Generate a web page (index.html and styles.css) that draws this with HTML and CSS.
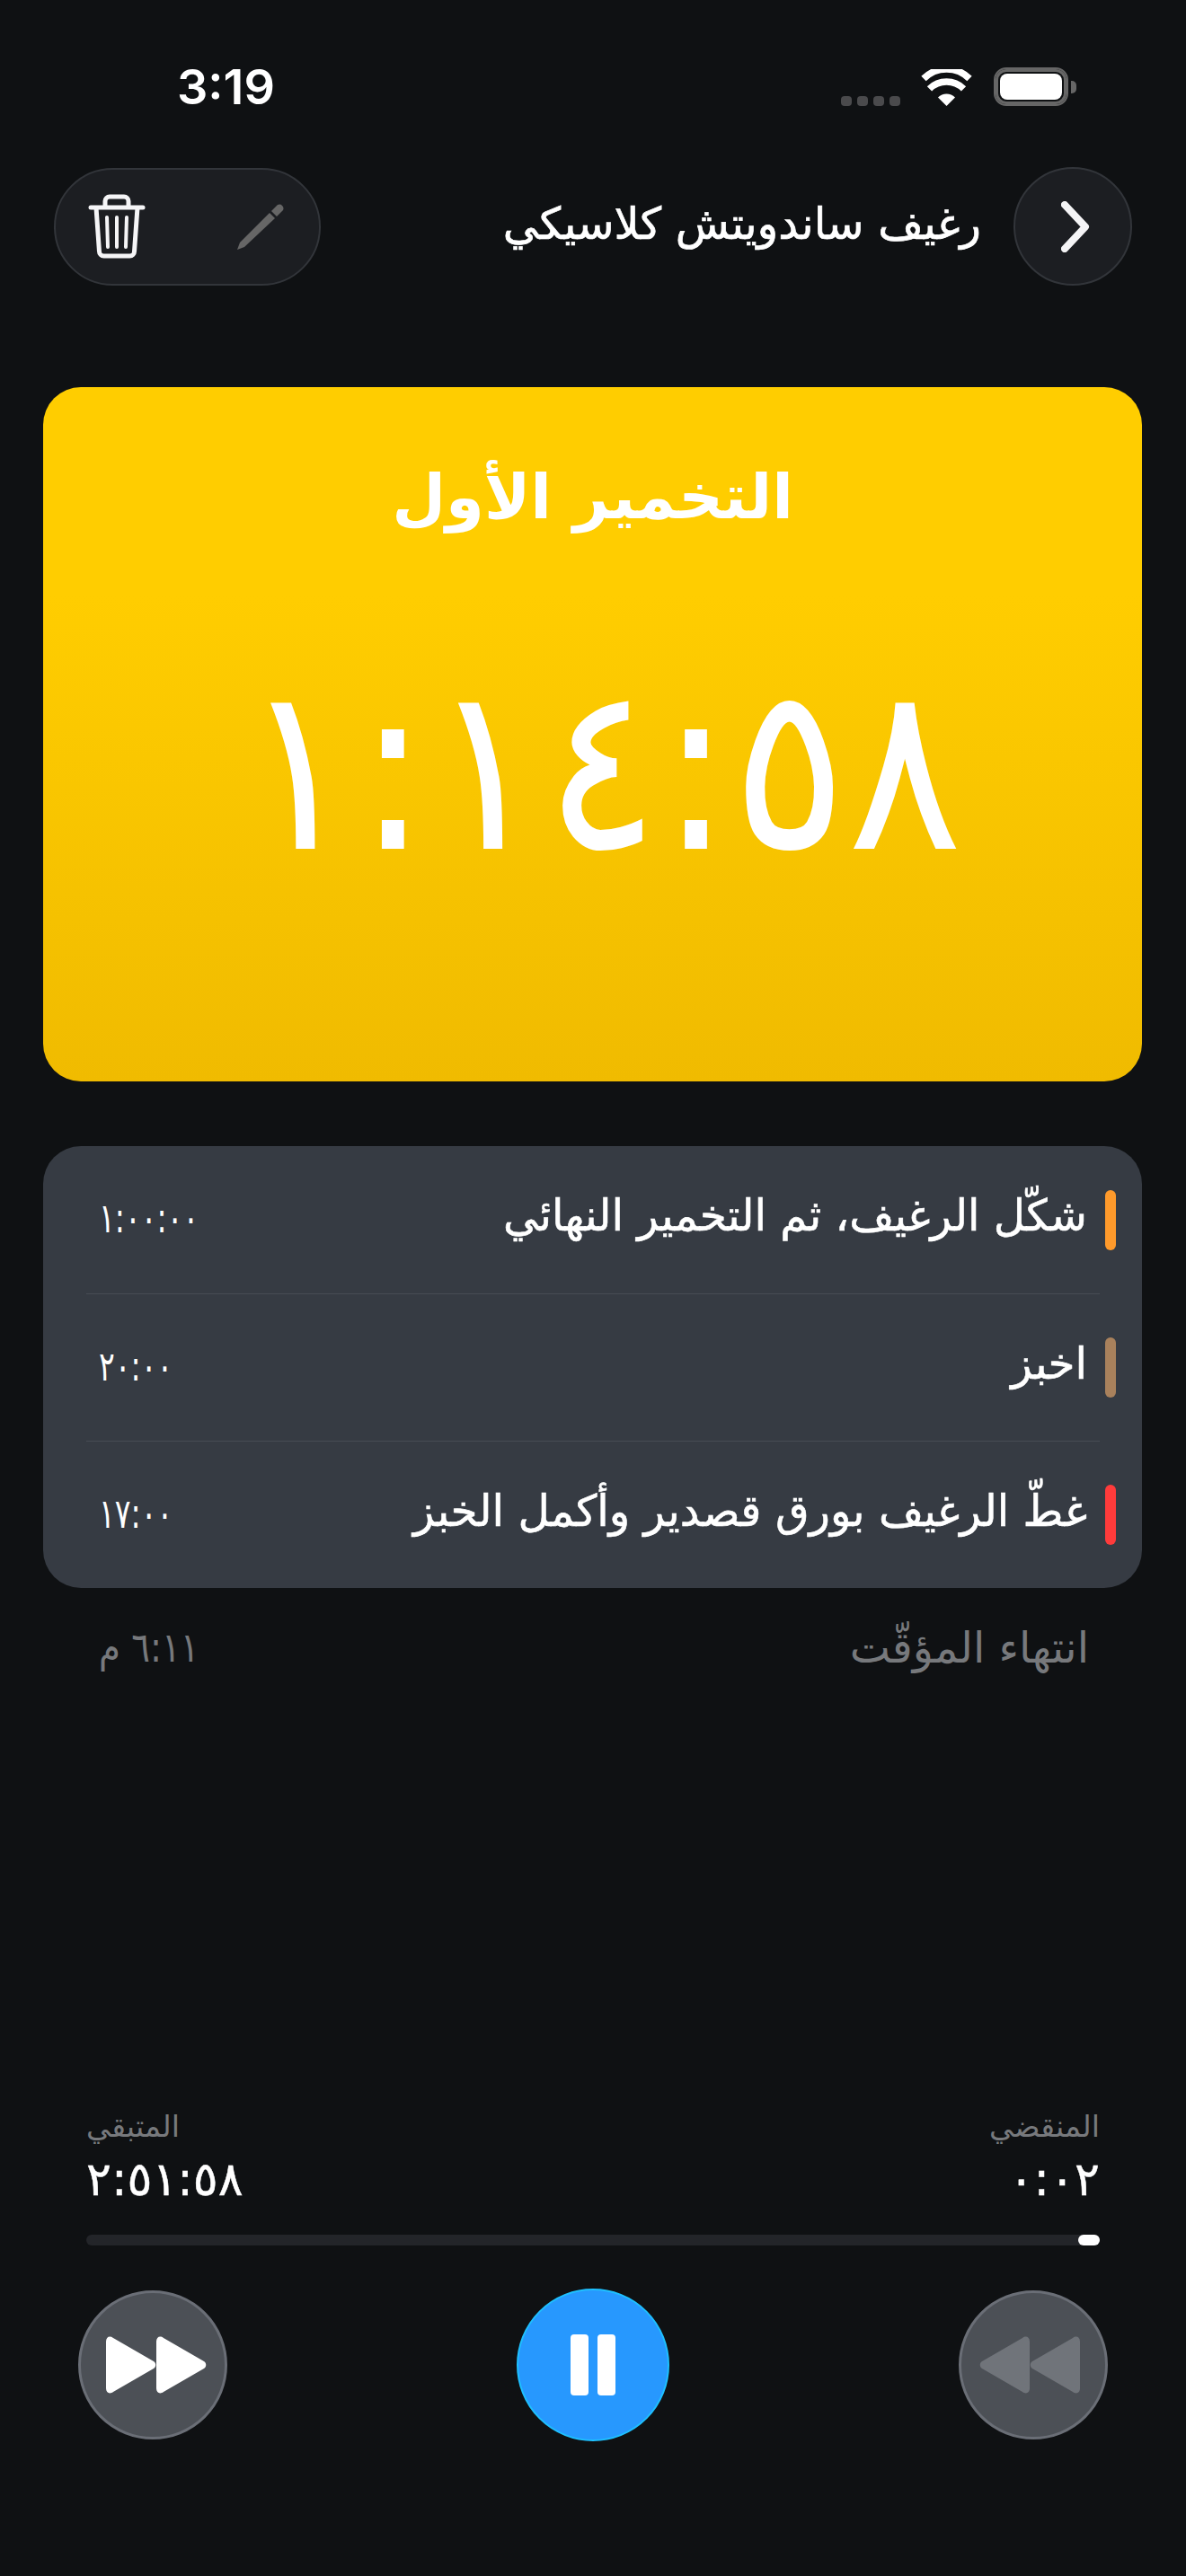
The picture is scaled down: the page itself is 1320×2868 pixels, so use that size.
FILE: index.html
```html
<!DOCTYPE html>
<html lang="ar" dir="rtl">
<head>
    <meta charset="UTF-8">
    <title>رغيف ساندويتش كلاسيكي</title>
    <link rel="stylesheet" href="styles.css">
</head>
<body>
<div class="page">
    <!-- status bar -->
    <div class="status" dir="ltr">
        <span class="clock">3:19</span>
        <div class="status_icons">
            <div class="signal"><i></i><i></i><i></i><i></i></div>
            <svg class="wifi" width="57" height="41" viewBox="0 0 57 41">
                <path d="M28.5 41 19 31.4a13.5 13.5 0 0 1 19 0z" fill="#fff"/>
                <path d="M9.5 21.8a27 27 0 0 1 38 0" fill="none" stroke="#fff" stroke-width="7.5"/>
                <path d="M3 11.5a36 36 0 0 1 51 0" fill="none" stroke="#fff" stroke-width="7.5" transform="translate(0 -1)"/>
            </svg>
            <div class="battery"><div class="battery_fill"></div></div>
            <div class="battery_nub"></div>
        </div>
    </div>

    <!-- title row -->
    <div class="topbar">
        <div class="round_btn">
            <svg width="32" height="57" viewBox="0 0 32 57"><path d="M4 4 27 28.500 4 53" fill="none" stroke="#f4f4f6" stroke-width="8" stroke-linecap="round" stroke-linejoin="round"/></svg>
        </div>
        <div class="recipe_name">رغيف ساندويتش كلاسيكي</div>
        <div class="tools">
            <svg width="54" height="54" viewBox="0 0 54 54">
                <path d="M1 53 4 45 37 12 43 18 9 50z" fill="#666"/>
                <path d="M39 10 46 3a4.500 4.500 0 0 1 6 6l-7 7z" fill="#666"/>
            </svg>
            <svg width="64" height="72" viewBox="0 0 64 72">
                <path d="M19 13V8a5 5 0 0 1 5-5h16a5 5 0 0 1 5 5v5" fill="none" stroke="#f5f5f7" stroke-width="5"/>
                <path d="M3 15h58" stroke="#f5f5f7" stroke-width="5" stroke-linecap="round"/>
                <path d="M9 15l3.500 49a5 5 0 0 0 5 5h29a5 5 0 0 0 5-5L55 15" fill="none" stroke="#f5f5f7" stroke-width="5"/>
                <path d="M21 26l1 33M32 26v33M43 26l-1 33" stroke="#f5f5f7" stroke-width="4" stroke-linecap="round"/>
            </svg>
        </div>
    </div>

    <!-- current step -->
    <div class="step_card">
        <div class="step_title">التخمير الأول</div>
        <div class="step_time" dir="ltr">١:١٤:٥٨</div>
    </div>

    <!-- next steps -->
    <div class="steps">
        <div class="step_row">
            <span class="step_mark orange"></span>
            <span class="step_name">شكّل الرغيف، ثم التخمير النهائي</span>
            <span class="step_len" dir="ltr">١:٠٠:٠٠</span>
        </div>
        <div class="step_row">
            <span class="step_mark brown"></span>
            <span class="step_name">اخبز</span>
            <span class="step_len" dir="ltr">٢٠:٠٠</span>
        </div>
        <div class="step_row">
            <span class="step_mark red"></span>
            <span class="step_name">غطّ الرغيف بورق قصدير وأكمل الخبز</span>
            <span class="step_len" dir="ltr">١٧:٠٠</span>
        </div>
    </div>
    <div class="finish">
        <span>انتهاء المؤقّت</span>
        <span class="finish_time">٦:١١ م</span>
    </div>

    <!-- progress and controls -->
    <div class="bottom">
        <div class="times">
            <div class="time_col">
                <div class="time_label">المنقضي</div>
                <div class="time_value right" dir="ltr">٠:٠٢</div>
            </div>
            <div class="time_col">
                <div class="time_label left">المتبقي</div>
                <div class="time_value" dir="ltr">٢:٥١:٥٨</div>
            </div>
        </div>
        <div class="progress"><div class="progress_thumb"></div></div>
        <div class="controls">
            <div class="ctrl_btn back">
                <svg width="114" height="66" viewBox="0 0 114 66">
                    <path d="M57 7c0-5-4-7-8-4L4 29c-3 2-3 6 0 8l45 26c4 3 8 1 8-4z" fill="#70747a"/>
                    <path d="M113 7c0-5-4-7-8-4L60 29c-3 2-3 6 0 8l45 26c4 3 8 1 8-4z" fill="#70747a"/>
                </svg>
            </div>
            <div class="play_btn"><span></span><span></span></div>
            <div class="ctrl_btn next">
                <svg width="114" height="66" viewBox="0 0 114 66">
                    <path d="M1 7c0-5 4-7 8-4l45 26c3 2 3 6 0 8L9 63c-4 3-8 1-8-4z" fill="#fff"/>
                    <path d="M57 7c0-5 4-7 8-4l45 26c3 2 3 6 0 8L65 63c-4 3-8 1-8-4z" fill="#fff"/>
                </svg>
            </div>
        </div>
    </div>
</div>
</body>
</html>
```
FILE: styles.css
```css
*{margin: 0;padding: 0;box-sizing: border-box;}
body{
    background-color: #0f1113;
    color: #fff;
    font-family: "DejaVu Sans", "Noto Sans", sans-serif;
}
.page{
    width: 1320px;
    height: 2868px;
    display: flex;
    flex-direction: column;
    overflow: hidden;
}

/* status bar */
.status{
    display: flex;
    justify-content: space-between;
    align-items: flex-end;
    height: 43px;
    margin-top: 75px;
    padding: 0 122px 0 197px;
}
.clock{
    font-family: Inter, sans-serif;
    font-weight: 600;
    font-size: 54px;
    line-height: 43px;
}
.status_icons{
    display: flex;
    align-items: flex-end;
}
.signal{
    display: flex;
    gap: 6px;
    margin-right: 23px;
}
.signal i{
    width: 12px;
    height: 11px;
    border-radius: 4px;
    background-color: #4a4a4c;
}
.wifi{
    margin-right: 24px;
}
.battery{
    width: 83px;
    height: 43px;
    padding: 5px;
    border: 2px solid #666;
    border-radius: 14px;
    box-shadow: inset 0 0 0 3px #666;
}
.battery_fill{
    width: 100%;
    height: 100%;
    background-color: #fff;
    border-radius: 8px;
}
.battery_nub{
    width: 6px;
    height: 14px;
    margin: 0 0 14px 3px;
    border-radius: 0 5px 5px 0;
    background-color: #666;
}

/* title row */
.topbar{
    display: flex;
    align-items: center;
    height: 132px;
    margin-top: 68px;
    padding: 0 60px;
}
.round_btn{
    display: flex;
    align-items: center;
    justify-content: center;
    width: 132px;
    height: 132px;
    padding-left: 6px;
    border-radius: 50%;
    background-color: #1c1e22;
    border: 2px solid #32353a;
}
.recipe_name{
    flex: 1;
    margin-right: 36px;
    padding-bottom: 6px;
    font-size: 49px;
    -webkit-text-stroke: 0.7px #fff;
}
.tools{
    display: flex;
    align-items: center;
    justify-content: space-between;
    width: 297px;
    height: 131px;
    padding: 0 38px 0 36px;
    border-radius: 66px;
    background-color: #1c1e22;
    border: 2px solid #32353a;
}

/* current step */
.step_card{
    display: flex;
    flex-direction: column;
    align-items: center;
    height: 773px;
    margin: 113px 49px 0 48px;
    border-radius: 42px;
    background: linear-gradient(to bottom, #ffcd00 0%, #ffcd00 30%, #f0bb00 100%);
}
.step_title{
    margin-top: 72px;
    font-weight: 700;
    font-size: 69px;
    line-height: 100px;
}
.step_time{
    margin: 113px 0 0 20px;
    font-size: 256px;
    line-height: 280px;
    transform: scaleX(.933);
}

/* next steps */
.steps{
    margin: 72px 49px 0 48px;
    border-radius: 42px;
    background-color: #363b43;
}
.step_row{
    display: flex;
    align-items: center;
    height: 164px;
    margin: 0 47px 0 48px;
    border-top: 1px solid #474c54;
}
.step_row:first-child{
    border-top: none;
}
.step_mark{
    width: 12px;
    height: 67px;
    margin: 0 -18px 0 0;
    border-radius: 6px;
}
.orange{background-color: #ff9a2b;}
.brown{background-color: #a9815c;}
.red{background-color: #ff3b3b;}
.step_name{
    flex: 1;
    margin-right: 20px;
    padding-bottom: 10px;
    font-size: 48.5px;
    -webkit-text-stroke: 0.6px #fff;
}
.step_len{
    margin-left: 14px;
    padding-bottom: 4px;
    font-size: 46px;
    transform: scaleX(.72);
    transform-origin: left center;
}
.finish{
    display: flex;
    justify-content: space-between;
    align-items: center;
    height: 74px;
    margin-top: 29px;
    padding: 0 108px 0 110px;
    font-size: 48px;
    color: #77797c;
}
.finish_time{
    font-size: 46px;
    transform: scaleX(.84);
    transform-origin: left center;
}

/* progress and controls */
.bottom{
    margin-top: auto;
    padding: 0 96px 150px;
}
.times{
    display: flex;
    justify-content: space-between;
}
.time_label{
    font-size: 33.5px;
    line-height: 40px;
    color: #77797c;
}
.time_label.left{
    text-align: left;
}
.time_value{
    margin-top: 10px;
    font-size: 52px;
    line-height: 56px;
    -webkit-text-stroke: 0.5px #fff;
}
.time_value.right{
    text-align: right;
}
.progress{
    display: flex;
    justify-content: flex-end;
    flex-direction: row-reverse;
    height: 12px;
    margin-top: 34px;
    border-radius: 6px;
    background-color: #232529;
}
.progress_thumb{
    width: 24px;
    height: 12px;
    border-radius: 6px;
    background-color: #fff;
}
.controls{
    display: flex;
    align-items: center;
    justify-content: space-between;
    margin: 48px -9px 0;
}
.ctrl_btn{
    display: flex;
    align-items: center;
    justify-content: center;
    width: 166px;
    height: 166px;
    border-radius: 50%;
    background-color: #4c5056;
    border: 3px solid #6a6e76;
}
.ctrl_btn.next{
    padding-left: 7px;
}
.ctrl_btn.back{
    padding-right: 8px;
}
.play_btn{
    display: flex;
    align-items: center;
    justify-content: center;
    gap: 10px;
    width: 170px;
    height: 170px;
    border-radius: 50%;
    background-color: #2798fe;
    border: 2px solid #1ec0ff;
}
.play_btn span{
    width: 20px;
    height: 68px;
    border-radius: 4px;
    background-color: #fff;
}
```
